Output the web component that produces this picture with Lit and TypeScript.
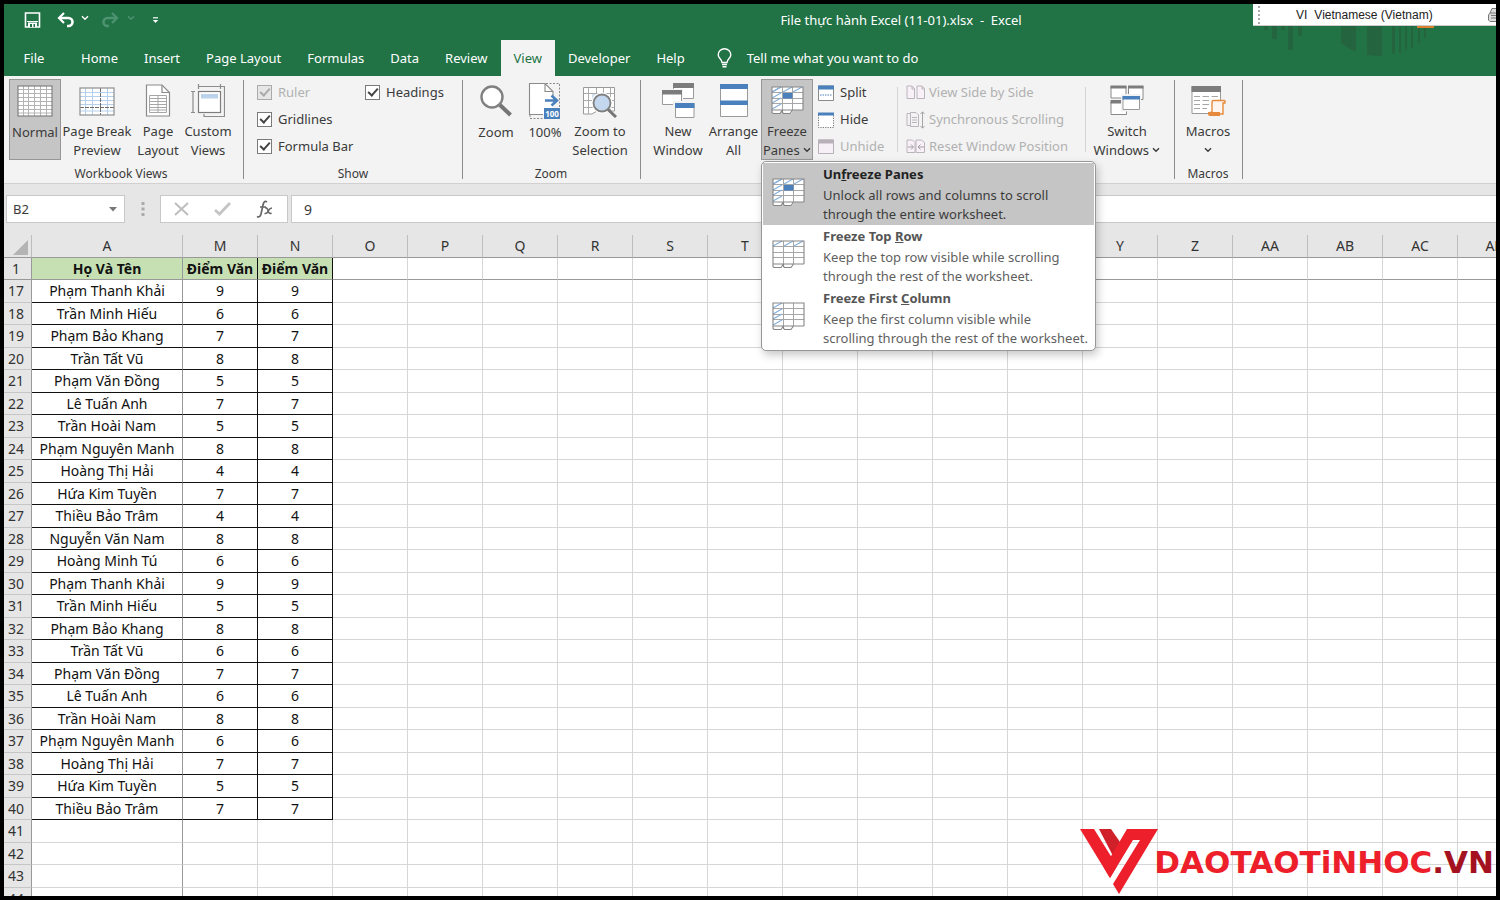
import { LitElement, html, css, svg, nothing } from "lit";
import { customElement, state } from "lit/decorators.js";
import { classMap } from "lit/directives/class-map.js";

const COLUMNS = ["A", "M", "N", "O", "P", "Q", "R", "S", "T", "U", "V", "W", "X", "Y", "Z", "AA", "AB", "AC", "AD"];

type Row = { n: number; cells: string[] };

const ROWS: Row[] = [
  ["Phạm Thanh Khải", "9"],
  ["Trần Minh Hiếu", "6"],
  ["Phạm Bảo Khang", "7"],
  ["Trần Tất Vũ", "8"],
  ["Phạm Văn Đồng", "5"],
  ["Lê Tuấn Anh", "7"],
  ["Trần Hoài Nam", "5"],
  ["Phạm Nguyên Manh", "8"],
  ["Hoàng Thị Hải", "4"],
  ["Hứa Kim Tuyền", "7"],
  ["Thiều Bảo Trâm", "4"],
  ["Nguyễn Văn Nam", "8"],
  ["Hoàng Minh Tú", "6"],
  ["Phạm Thanh Khải", "9"],
  ["Trần Minh Hiếu", "5"],
  ["Phạm Bảo Khang", "8"],
  ["Trần Tất Vũ", "6"],
  ["Phạm Văn Đồng", "7"],
  ["Lê Tuấn Anh", "6"],
  ["Trần Hoài Nam", "8"],
  ["Phạm Nguyên Manh", "6"],
  ["Hoàng Thị Hải", "7"],
  ["Hứa Kim Tuyền", "5"],
  ["Thiều Bảo Trâm", "7"],
  [], [], [], [],
].map((c, i) => ({ n: 17 + i, cells: c.length ? [c[0], c[1], c[1]] : [] }));

const chevron = html`<svg class="chev" width="8" height="6" viewBox="0 0 8 6"><path d="M1 1.2 4 4.2 7 1.2" fill="none" stroke="currentColor" stroke-width="1.4"/></svg>`;

const sheetIcon = (kind: "both" | "row" | "col") => {
  const slashes: unknown[] = [];
  if (kind !== "col") for (const x of [1, 12, 22]) slashes.push(svg`<path d="M${x} 6 ${x + 9} 1"/>`);
  if (kind !== "row") for (const y of [6, 12, 17, 23]) slashes.push(svg`<path d="M1 ${y} 10 ${y - 5}"/>`);
  return html`<svg width="33" height="29" viewBox="0 0 33 29">
    <path d="M1 1H32V24H22L20 27.5H12L10 24.5 9 27.5H1Z" fill="#fff"/>
    <g fill="none" stroke="#a6a6a6" stroke-width="1"><path d="M1 6.5H32M1 12.5H32M1 17.5H32M11.5 1V24M21.5 1V24"/></g>
    <g fill="none" stroke="#86afdb" stroke-width="1.2">${slashes}</g>
    <path d="M32 24V1H1V26.500L2 27.500H9L11.500 24H32M11.500 24V26.500L12.500 27.500H19L21.500 24M1 24H11" fill="none" stroke="#868686" stroke-width="1.1"/>
    ${kind === "both" ? svg`<rect x="12" y="7" width="9.500" height="5.500" fill="#4a80bb"/>` : nothing}
  </svg>`;
};

const icons = {
  normal: html`<svg width="36" height="32" viewBox="0 0 36 32"><rect x="1" y="1" width="34" height="30" fill="#fff"/>
    <path d="M1 4.500H35M1 8.500H35M1 12.500H35M1 16.500H35M1 20.500H35M1 24.500H35M1 28H35M6.500 1V31M11.500 1V31M17.500 1V31M23.500 1V31M29.500 1V31" stroke="#b4b4b4"/>
    <rect x="1" y="1" width="34" height="30" fill="none" stroke="#808080" stroke-width="1.200"/></svg>`,
  breaks: html`<svg width="36" height="32" viewBox="0 0 36 32"><rect x="1" y="3" width="34" height="27" fill="#fff"/>
    <path d="M1 7.500H35M1 11.500H35M1 15.500H35M1 19.500H35M1 26H35M6.500 3V30M13.500 3V30M28.500 3V30" stroke="#b5d0ec"/>
    <path d="M21.500 3V30M1 22.500H35" stroke="#6c6c6c" stroke-dasharray="4 1"/>
    <rect x="1" y="3" width="34" height="27" fill="none" stroke="#8f8f8f" stroke-width="1.200"/></svg>`,
  page: html`<svg width="26" height="33" viewBox="0 0 26 33"><path d="M1.500 1H17L24.500 8.500V32H1.500Z" fill="#fff" stroke="#8a8a8a" stroke-width="1.200"/>
    <path d="M17 1V8.500H24.500" fill="none" stroke="#8a8a8a" stroke-width="1.200"/>
    <path d="M4.500 11.500H21.500V28.500H4.500ZM4.500 14.500H21.500M4.500 17.500H21.500M4.500 20.500H21.500M4.500 23.500H21.500M4.500 26H21.500M13 11.500V28.500" fill="none" stroke="#a6a6a6"/></svg>`,
  custom: html`<svg width="34" height="34" viewBox="0 0 34 34"><rect x="7.500" y="7.500" width="22" height="21" fill="#fff" stroke="#7d7d7d" stroke-width="1.200"/>
    <rect x="10" y="10" width="17" height="4.500" fill="#bcd2ec"/>
    <path d="M7.500 0V5M29.500 0V5M7.500 2.500H29.500M0 7.500H4M0 28.500H4M2 7.500V28.500M30 2.500H33.500V32.500H13V30" fill="none" stroke="#8c8c8c" stroke-width="1.200"/></svg>`,
  zoom: html`<svg width="34" height="34" viewBox="0 0 34 34"><circle cx="13" cy="13" r="10.500" fill="#fff" stroke="#808080" stroke-width="2.400"/><path d="M21 21 31.500 31" stroke="#757575" stroke-width="4"/></svg>`,
  hundred: html`<svg width="34" height="38" viewBox="0 0 34 38"><path d="M2 1.500H18L25 8.500V32.500H2Z" fill="#fff"/>
    <path d="M18 1.500H31.500V26M2 33V36.500H16" fill="none" stroke="#8a8a8a" stroke-dasharray="2 1.500"/>
    <path d="M15 32.500H1.500V1.500H17L25 9.500V15M17 1.500V9.500H25" fill="none" stroke="#8a8a8a" stroke-width="1.100"/>
    <path d="M17 18.500H27M23.500 13.500 29 18.500 23.500 23.500" fill="none" stroke="#4a80bb" stroke-width="2.600"/>
    <rect x="16" y="26" width="16" height="11" fill="#4a80bb"/><text x="24" y="34.500" text-anchor="middle" font-size="8" font-weight="700" fill="#fff">100</text></svg>`,
  selection: html`<svg width="36" height="34" viewBox="0 0 36 34"><path d="M1.500 3.500H32.500V27H15L10 30H1.500Z" fill="#fff" stroke="#999"/>
    <path d="M1.500 9.500H32.500M1.500 16.500H32.500M1.500 23.500H32.500M6.500 3.500V30M14.500 3.500V28M21.500 3.500V28M28.500 3.500V28" stroke="#aaa"/>
    <rect x="10" y="10" width="8" height="13" fill="#d3e0f0"/><circle cx="20" cy="19" r="8.500" fill="#bdd3ec" stroke="#fff" stroke-width="4"/>
    <circle cx="20" cy="19" r="8.500" fill="#c3d7ee" stroke="#808080" stroke-width="1.800"/><path d="M26 25.500 34 33" stroke="#757575" stroke-width="3"/></svg>`,
  newWindow: html`<svg width="34" height="36" viewBox="0 0 34 36"><g fill="#fff" stroke="#9a9a9a"><path d="M12.500 .5H32.500V15.500H12.500Z"/></g><path d="M12 0H33V5H12Z" fill="#7c7c7c"/>
    <path d="M0 6H22V23H0Z" fill="#f3f3f3"/><path d="M1.500 7.500H20.500V21.500H1.500Z" fill="#fff" stroke="#9a9a9a"/><path d="M1 7H21V11.500H1Z" fill="#7c7c7c"/>
    <path d="M12 18H34V36H12Z" fill="#f3f3f3"/><path d="M14.500 20.500H33V34.500H14.500Z" fill="#fff" stroke="#9a9a9a"/><path d="M14 20H33.500V25H14Z" fill="#4a80bb"/></svg>`,
  arrange: html`<svg width="30" height="34" viewBox="0 0 30 34"><path d="M1.500 1V32.500H28.500V1" fill="#fff" stroke="#9a9a9a"/><path d="M1 0H29V5H1ZM1 16.500H29V21H1Z" fill="#4a80bb"/></svg>`,
  switchW: html`<svg width="34" height="32" viewBox="0 0 34 32"><g fill="#fff" stroke="#8a8a8a"><path d="M1 1.500H16V13H1ZM18.500 1.500H33V14.500H18.500ZM1 17H16.500V29.500H1Z"/></g><path d="M.5 .5H16.500V3.500H.5ZM18 .5H33.500V3.500H18ZM.5 15H16.500V18.500H.5Z" fill="#7c7c7c"/>
    <path d="M11 9H31V26.500H11Z" fill="#f3f3f3"/><path d="M13 11.500H29.500V24.500H13Z" fill="#fff" stroke="#9a9a9a"/><path d="M12.500 11H30V14.500H12.500Z" fill="#4a80bb"/></svg>`,
  macros: html`<svg width="36" height="34" viewBox="0 0 36 34"><path d="M2 2.500H30.500V29.500H2Z" fill="#fff" stroke="#999"/><path d="M1.500 2H31V8H1.500Z" fill="#7c7c7c"/>
    <path d="M4 12.500H10M12.500 12.500H19M21.500 12.500H28M4 16.500H10M12.500 16.500H19M4 20.500H10M12.500 20.500H19M4 24.500H10M12.500 24.500H17" stroke="#a6a6a6"/>
    <path d="M22 18Q22 16.500 23.500 16.500H34Q35.500 16.500 35 19H33V30H20V28.500H22Z" fill="#fdf5ee" stroke="#e58a3c" stroke-width="1.400"/><path d="M18 28H30V32H19.500Q17.500 31 18 28Z" fill="#e58a3c"/></svg>`,
  split: html`<svg width="16" height="16" viewBox="0 0 16 16"><path d="M.5 1H15.500V15.500H.5Z" fill="#fff" stroke="#8a8a8a"/><path d="M0 .5H16V4.500H0Z" fill="#4a80bb"/><path d="M2 10H14" stroke="#4a80bb" stroke-dasharray="1.500 1"/></svg>`,
  hide: html`<svg width="16" height="16" viewBox="0 0 16 16"><path d="M.5 3V15.500H15.500V3" fill="#fff" stroke="#777" stroke-dasharray="1.200 1.200"/><path d="M0 .5H16V3.500H0Z" fill="#4a80bb"/></svg>`,
  unhide: html`<svg width="16" height="16" viewBox="0 0 16 16"><path d="M.5 1H15.500V14.500H.5Z" fill="#f7f0f7" stroke="#b9b1b9"/><path d="M0 .5H16V4.500H0Z" fill="#b9b1b9"/></svg>`,
  side: html`<svg width="20" height="15" viewBox="0 0 20 15"><path d="M1 1H6L8.500 3.500V13.500H1ZM11 1H16L18.500 3.500V13.500H11ZM6 1V4H8.500M16 1V4H18.500" fill="#f8f1f8" stroke="#bcb4bc"/></svg>`,
  sync: html`<svg width="20" height="18" viewBox="0 0 20 18"><path d="M4 2.500H1V14.500H4M4.500 1.500H10L12.500 4V15.500H4.500ZM6 6.500H11M6 9H11M6 11.500H11" fill="none" stroke="#bcb4bc"/><path d="M16.500 1V17M14.500 3 16.500 .8 18.500 3M14.500 15 16.500 17.200 18.500 15" fill="none" stroke="#a8a4a8"/></svg>`,
  reset: html`<svg width="20" height="15" viewBox="0 0 20 15"><path d="M1 1H6.500L9 3.500V13.500H1ZM10 1H15.500L18.500 3.500V13.500H10Z" fill="#f8f1f8" stroke="#bcb4bc"/><path d="M2 8H7M5 5.500 7.500 8 5 10.500M18 8H12.500M14.500 5.500 12 8 14.500 10.500" fill="none" stroke="#a49ca4"/></svg>`,
};

@customElement("app-root")
export class AppRoot extends LitElement {
  @state() private tab = "View";

  static styles = css`
    :host { display: block; height: 100vh; font: 13px/19px "Noto Sans", "Open Sans", sans-serif; color: #3a3a3a; }
    * { box-sizing: border-box; }
    button, input { font: inherit; color: inherit; margin: 0; border: 0; padding: 0; background: none; }
    svg { display: block; flex: none; }
    .window { position: relative; height: 100%; display: flex; flex-direction: column; border: 4px solid #000; overflow: hidden; background: #e6e6e6; }

    .banner { position: relative; flex: none; background: #217346; color: #fff; }
    .titlebar { display: flex; align-items: center; height: 36px; padding: 0 0 4px 20px; }
    .quick { display: flex; align-items: center; width: 282px; }
    .quick button { display: flex; align-items: center; }
    .save { margin-right: 16px; }
    .undo { gap: 6px; margin-right: 12px; }
    .redo { gap: 8px; margin-right: 17px; color: #4e9370; }
    .title { flex: 1; text-align: center; white-space: pre; }
    .tabs { display: flex; height: 36px; }
    .tab { padding: 0 13px; white-space: nowrap; }
    .tab.file { width: 64px; padding: 0 4px 0 0; }
    .tab.on { background: #f3f3f3; color: #217346; }
    .tell { display: flex; align-items: center; gap: 15px; padding: 0 19px; white-space: nowrap; }
    .skyline { position: absolute; right: 56px; top: 20px; }
    .lang { position: absolute; right: 0; top: 0; width: 243px; height: 22px; display: flex; align-items: center; overflow: hidden; background: #fff; color: #222; font: 12px/18px "Liberation Sans", Arial, sans-serif; border-bottom: 1px solid #ccc; }
    .grip { width: 2px; height: 18px; margin: 0 36px 0 5px; border-left: 2px dotted #aaa; }
    .lang .name { margin-left: 7px; flex: 1; }

    .ribbon { flex: none; display: flex; height: 108px; padding-left: 5px; background: #f3f3f3; border-bottom: 1px solid #d2d0d0; }
    .group { display: flex; flex-direction: column; padding-top: 3px; position: relative; border-right: 1px solid transparent; border-image: linear-gradient(#f3f3f3 5px, #8c8c8c 5px, #8c8c8c 102px, #f3f3f3 102px) 1; }
    .tools { display: flex; height: 81px; }
    .caption { text-align: center; font-size: 12px; line-height: 28px; height: 24px; }
    .g-views { padding-right: 10px; }
    .g-show { padding-left: 13px; width: 219px; }
    .g-show .caption { padding-right: 13px; }
    .g-zoom { padding: 3px 9px 0 8px; }
    .g-window { padding: 3px 11px 0 9px; }
    .g-macros { padding: 3px 9px 0 8px; }
    .big { display: flex; flex-direction: column; align-items: center; height: 81px; white-space: nowrap; text-align: center; }
    .big .ico { height: 44px; display: flex; align-items: center; justify-content: center; }
    .big.pressed { background: #c5c5c5; outline: 1px solid #979797; outline-offset: -1px; }
    .w48 { width: 48px; } .w50 { width: 50px; } .w52 { width: 52px; } .w55 { width: 55px; } .w56 { width: 56px; } .w62 { width: 62px; } .w72 { width: 72px; }
    .chev { display: inline-block; vertical-align: middle; margin-bottom: 4px; }
    .checks { display: grid; grid-template: repeat(3, 27px) / 108px auto; justify-content: start; }
    .check { display: flex; align-items: center; gap: 6px; white-space: nowrap; }
    .check input { appearance: none; width: 15px; height: 15px; border: 1px solid #7a7a7a; background: #fff; display: grid; place-items: center; }
    .check input::after { content: ""; width: 8px; height: 4px; margin-bottom: 3px; border: solid #444; border-width: 0 0 2px 2px; rotate: -48deg; }
    .check.off, .small:disabled { color: #b1b1b1; }
    .check.off input { background: #e6e6e6; border-color: #ababab; }
    .check.off input::after { border-color: #aaa; }
    .freeze { position: relative; }
    .stack { display: grid; grid-template-rows: repeat(3, 27px); justify-items: start; }
    .small { display: flex; align-items: center; gap: 6px; white-space: nowrap; }
    .stack.panes { width: 84px; padding-left: 5px; }
    .stack.sync { width: 187px; padding-left: 8px; }
    .stack.sync .small { gap: 3px; }
    .rule { width: 1px; margin: 8px 0; background: #d4d4d4; }
    .stack.sync + .rule { margin-right: 5px; }
    .menu { position: absolute; z-index: 2; left: 0; top: 82px; width: 335px; padding: 1px; background: #fff; border: 1px solid #979797; border-radius: 5px; box-shadow: 2px 4px 8px rgba(0, 0, 0, .22); }
    .item { display: flex; gap: 18px; width: 100%; height: 62px; padding: 2px 0 0 9px; text-align: left; color: #5f5f5f; white-space: nowrap; }
    .item svg { margin-top: 13px; }
    .item b { display: block; margin-bottom: 2px; color: #555; }
    .item.hot { background: #c5c5c5; color: #3c3c3c; }
    .item.hot b { color: #222; }

    .formula { flex: none; display: flex; align-items: center; height: 51px; padding: 0 0 1px 2px; }
    .box { display: flex; align-items: center; height: 28px; background: #fff; border: 1px solid #c8c8c8; }
    .namebox { width: 119px; padding: 0 7px 0 6px; }
    .namebox input { flex: 1; min-width: 0; }
    .dots { width: 35px; display: grid; place-items: center; }
    .fx { width: 128px; margin-right: 3px; padding: 0 13px; justify-content: space-between; }
    .entry { flex: 1; border-right: 0; padding-left: 12px; font-size: 14px; }
    .entry input { width: 100%; }

    .sheet { flex: 1; min-height: 0; overflow: hidden; background: #fff; }
    table { table-layout: fixed; width: 1529px; border-collapse: separate; border-spacing: 0; font-size: 14px; line-height: 20px; color: #111; }
    .c-num { width: 28px; } .c-name { width: 151px; } .c-col { width: 75px; }
    th, td { height: 22px; padding: 0; border: solid #d6d6d6; border-width: 0 1px 1px 0; text-align: center; white-space: nowrap; font-weight: 400; }
    tr.tall > * { height: 23px; }
    thead th, tbody th { background: #e6e6e6; color: #333; border-color: #ababab; }
    thead th { border-right-color: #bdbdbd; border-bottom-color: #999; }
    tbody th { padding-right: 3px; border-bottom-color: #c6c6c6; border-right-color: #999; }
    td.split { border-right-color: #999; }
    td.data { border-color: #111; }
    td.data.split { border-right-color: #999; }
    tr.top td.data { background: #c6e0b4; font-weight: 700; border-bottom-color: #999; }
    tr.top > * { border-bottom-color: #999; }
    .corner svg { margin: 2px 3px 0 auto; }

    .brand { position: absolute; right: 2px; bottom: 1px; display: flex; align-items: center; color: #ec1f2b; font: 700 31px/30px "DejaVu Sans", sans-serif; text-decoration: none; }
    .brand svg { margin-right: -4px; }
    .brand .tld { color: #a5121f; }
  `;

  private big(label: string[], icon: unknown, width: string, opts: { pressed?: boolean; arrow?: boolean } = {}) {
    return html`<button class=${classMap({ big: true, [width]: true, pressed: !!opts.pressed })}>
      <span class="ico">${icon}</span>
      ${label.map((l, i) => html`<span>${l}${opts.arrow && i === label.length - 1 ? html` ${chevron}` : nothing}</span>`)}
    </button>`;
  }

  private check(label: string, off = false) {
    return html`<label class=${classMap({ check: true, off })}><input type="checkbox" checked ?disabled=${off}>${label}</label>`;
  }

  private small(label: string, icon: unknown, off = false) {
    return html`<button class="small" ?disabled=${off}>${icon}${label}</button>`;
  }

  private banner() {
    const tabs = ["File", "Home", "Insert", "Page Layout", "Formulas", "Data", "Review", "View", "Developer", "Help"];
    return html`<header class="banner">
      <svg class="skyline" width="180" height="36" viewBox="0 0 180 36">
        <path fill="#246540" d="M4 2h4v4H4zM12 2h5v13h-5zM21 2h4v4h-4zM28 2h5v24h-5zM38 2h4v10h-4zM81 2h15v26q-9-4-15-9zM107 2h15v30q-8 0-15-1zM132 2h3v28h-3zM139 2h2v27h-2zM145 2h2v24h-2zM151 2h2v22h-2zM158 2h2v17h-2zM164 2h2v12h-2z"/>
        <path d="M157 2h17v2h-17z" fill="#d9822b"/></svg>
      <div class="titlebar">
        <div class="quick">
          <button class="save" aria-label="Save"><svg width="17" height="16" viewBox="0 0 17 16"><path d="M1.500 1H15.500V15H1.500Z" fill="none" stroke="#fff" stroke-width="1.600"/><path d="M3 9H14V10H3ZM4 10.500H13V15H4Z" fill="#fff"/><path d="M6 12H8V15H6ZM9.500 12H11V15H9.500Z" fill="#217346"/></svg></button>
          <button class="undo" aria-label="Undo"><svg width="18" height="16" viewBox="0 0 18 16"><path d="M3 6H11.500A4 4 0 0 1 11.500 14H10" fill="none" stroke="currentColor" stroke-width="2.600"/><path d="M7 1 2 6 7 11" fill="none" stroke="currentColor" stroke-width="2.200"/></svg>${chevron}</button>
          <button class="redo" aria-label="Redo"><svg width="18" height="16" viewBox="0 0 18 16"><path d="M15 6H6.500A4 4 0 0 0 6.500 14H8" fill="none" stroke="currentColor" stroke-width="2.600"/><path d="M11 1 16 6 11 11" fill="none" stroke="currentColor" stroke-width="2.200"/></svg>${chevron}</button>
          <button aria-label="Customize toolbar"><svg width="7" height="7" viewBox="0 0 7 7"><path d="M1 .8H6" stroke="#fff" stroke-width="1.200"/><path d="M.8 3H6.200L3.500 6Z" fill="#fff"/></svg></button>
        </div>
        <div class="title">File thực hành Excel (11-01).xlsx  -  Excel</div>
      </div>
      <nav class="tabs">
        ${tabs.map((t) => html`<button class=${classMap({ tab: true, on: t === this.tab, file: t === "File" })} @click=${() => (this.tab = t)}>${t}</button>`)}
        <button class="tell"><svg width="15" height="20" viewBox="0 0 15 20"><path d="M5 14.500C5 11 1.200 10.500 1.200 6.800A6.200 6 0 0 1 13.800 6.800C13.800 10.500 10 11 10 14.500ZM5 16.500H10M5.500 18.800H9.500" fill="none" stroke="#fff" stroke-width="1.400"/></svg>Tell me what you want to do</button>
      </nav>
      <div class="lang"><span class="grip"></span><span>VI</span><span class="name">Vietnamese (Vietnam)</span>
        <svg width="9" height="16" viewBox="0 0 9 16"><path d="M9 1.500H5L3 6 1.500 8V13L3 14.500H9M3 6H9M4 8.500H9M4 11H9" fill="#ddd" stroke="#777"/></svg></div>
    </header>`;
  }

  private menu() {
    const items = [
      { kind: "both" as const, t: ["Un", "f", "reeze Panes"], d: ["Unlock all rows and columns to scroll", "through the entire worksheet."] },
      { kind: "row" as const, t: ["Freeze Top ", "R", "ow"], d: ["Keep the top row visible while scrolling", "through the rest of the worksheet."] },
      { kind: "col" as const, t: ["Freeze First ", "C", "olumn"], d: ["Keep the first column visible while", "scrolling through the rest of the worksheet."] },
    ];
    return html`<div class="menu" role="menu">${items.map((m, i) => html`
      <button class=${classMap({ item: true, hot: i === 0 })} role="menuitem">${sheetIcon(m.kind)}
        <span><b>${m.t[0]}<u>${m.t[1]}</u>${m.t[2]}</b>${m.d[0]}<br>${m.d[1]}</span></button>`)}</div>`;
  }

  private ribbon() {
    return html`<section class="ribbon">
      <div class="group g-views"><div class="tools">
        ${this.big(["Normal"], icons.normal, "w52", { pressed: true })}
        ${this.big(["Page Break", "Preview"], icons.breaks, "w72")}
        ${this.big(["Page", "Layout"], icons.page, "w50")}
        ${this.big(["Custom", "Views"], icons.custom, "w50")}
      </div><div class="caption">Workbook Views</div></div>
      <div class="group g-show"><div class="checks">
        ${this.check("Ruler", true)}${this.check("Headings")}${this.check("Gridlines")}<span></span>${this.check("Formula Bar")}
      </div><div class="caption">Show</div></div>
      <div class="group g-zoom"><div class="tools">
        ${this.big(["Zoom"], icons.zoom, "w50")}
        ${this.big(["100%"], icons.hundred, "w48")}
        ${this.big(["Zoom to", "Selection"], icons.selection, "w62")}
      </div><div class="caption">Zoom</div></div>
      <div class="group g-window"><div class="tools">
        ${this.big(["New", "Window"], icons.newWindow, "w56")}
        ${this.big(["Arrange", "All"], icons.arrange, "w55")}
        <div class="freeze">${this.big(["Freeze", "Panes"], sheetIcon("both"), "w52", { pressed: true, arrow: true })}${this.menu()}</div>
        <div class="stack panes">${this.small("Split", icons.split)}${this.small("Hide", icons.hide)}${this.small("Unhide", icons.unhide, true)}</div>
        <span class="rule"></span>
        <div class="stack sync">${this.small("View Side by Side", icons.side, true)}${this.small("Synchronous Scrolling", icons.sync, true)}${this.small("Reset Window Position", icons.reset, true)}</div>
        <span class="rule"></span>
        ${this.big(["Switch", "Windows"], icons.switchW, "w72", { arrow: true })}
      </div></div>
      <div class="group g-macros"><div class="tools">
        ${this.big(["Macros", ""], icons.macros, "w50", { arrow: true })}
      </div><div class="caption">Macros</div></div>
    </section>`;
  }

  private formulaBar() {
    return html`<section class="formula">
      <div class="box namebox"><input aria-label="Name box" .value=${"B2"}><button aria-label="Names"><svg width="8" height="5" viewBox="0 0 8 5"><path d="M0 0H8L4 4.500Z" fill="#777"/></svg></button></div>
      <span class="dots"><svg width="4" height="14" viewBox="0 0 4 14"><path d="M.5 0h3v3h-3zM.5 5.500h3v3h-3zM.5 11h3v3h-3z" fill="#ababab"/></svg></span>
      <div class="box fx">
        <button aria-label="Cancel"><svg width="15" height="14" viewBox="0 0 15 14"><path d="M1 1 14 13M14 1 1 13" stroke="#bdbdbd" stroke-width="2"/></svg></button>
        <button aria-label="Enter"><svg width="17" height="14" viewBox="0 0 17 14"><path d="M1 8 5.500 12 16 1" fill="none" stroke="#c4c4c4" stroke-width="2.800"/></svg></button>
        <button aria-label="Insert function"><svg width="18" height="20" viewBox="0 0 18 20"><path d="M11 3Q8 1 7 6L5 15Q4 19 1 17.500M4 8H10" fill="none" stroke="#666" stroke-width="1.700"/><path d="M9 9Q11 8 12 11.500 13 15.500 15.500 14M16 9Q14 9 12.500 11.500 11 15 8.500 14.500" fill="none" stroke="#666" stroke-width="1.500"/></svg></button>
      </div>
      <div class="box entry"><input aria-label="Formula" .value=${"9"}></div>
    </section>`;
  }

  private cells(values: string[]) {
    return COLUMNS.map((_, i) => html`<td class=${classMap({ data: i < values.length, split: i === 0 })}>${values[i] ?? nothing}</td>`);
  }

  private sheet() {
    return html`<main class="sheet"><table>
      <colgroup><col class="c-num"><col class="c-name">${COLUMNS.slice(1).map(() => html`<col class="c-col">`)}</colgroup>
      <thead><tr class="tall"><th class="corner"><svg width="15" height="15" viewBox="0 0 15 15"><path d="M15 0V15H0Z" fill="#b4b4b4"/></svg></th>${COLUMNS.map((c) => html`<th scope="col">${c}</th>`)}</tr></thead>
      <tbody>
        <tr class="top"><th scope="row">1</th>${this.cells(["Họ Và Tên", "Điểm Văn", "Điểm Văn"])}</tr>
        ${ROWS.map((r, i) => html`<tr class=${i % 2 ? "" : "tall"}><th scope="row">${r.n}</th>${this.cells(r.cells)}</tr>`)}
      </tbody></table></main>`;
  }

  render() {
    return html`<div class="window">
      ${this.banner()}${this.ribbon()}${this.formulaBar()}${this.sheet()}
      <a class="brand" href="#"><svg width="78" height="66" viewBox="0 0 78 66">
        <path d="M0 0H14L37 37 30 49Z" fill="#ec1f2b"/><path d="M19 0H31L40 13 33 27Z" fill="#d0202a"/>
        <path d="M47 0H78L39 65 33 55 60 11H53L30 49 24 39Z" fill="#ec1f2b"/></svg><span>DAOTAOTiNHOC<span class="tld">.VN</span></span></a>
    </div>`;
  }
}
